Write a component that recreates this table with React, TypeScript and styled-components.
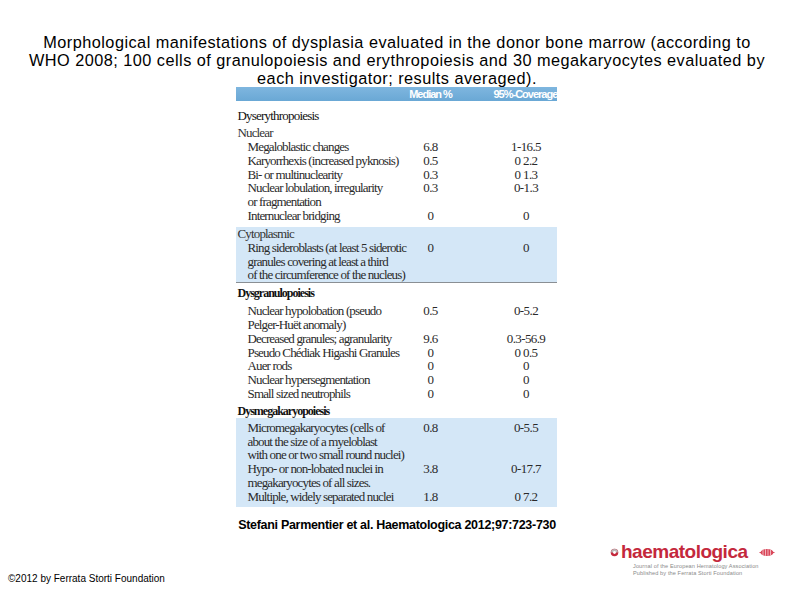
import React from "react";
import styled, { createGlobalStyle } from "styled-components";

const Global = createGlobalStyle`
  html, body { margin: 0; padding: 0; background: #fff; }
  #root { width: 794px; height: 595px; }
`;

const Page = styled.div`
  width: 794px;
  height: 595px;
  display: flex;
  flex-direction: column;
  align-items: center;
  background: #fff;
  overflow: hidden;
`;

const Title = styled.h1`
  margin: 0;
  padding-top: 33px;
  width: 780px;
  font-family: "Liberation Sans", Arial, sans-serif;
  font-weight: normal;
  font-size: 16.3px;
  letter-spacing: 0.47px;
  line-height: 18px;
  text-align: center;
  color: #000;
`;

const Table = styled.div`
  width: 321px;
  margin-left: -2px;
  font-family: "Liberation Serif", "Times New Roman", serif;
  color: #2a2a2a;
  font-size: 13px;
  letter-spacing: -0.85px;
`;

const HeaderBar = styled.div`
  height: 14px;
  display: grid;
  grid-template-columns: 170px 50px 1fr;
  align-items: center;
  background: linear-gradient(#7fb6df, #6aa8d5);
`;

const HeaderCell = styled.div<{ $offset?: number }>`
  grid-column: ${(p) => (p.$offset ? 3 : 2)};
  padding-left: ${(p) => p.$offset ?? 0}px;
  text-align: center;
  font-family: "Liberation Sans", Arial, sans-serif;
  font-weight: bold;
  font-size: 11px;
  letter-spacing: -1px;
  line-height: 14px;
  color: #fff;
  white-space: nowrap;
`;

const Heading = styled.div<{ $bold?: boolean; $gap: number }>`
  margin-top: ${(p) => p.$gap}px;
  padding-left: 2px;
  line-height: 14px;
  font-size: ${(p) => (p.$bold ? 12 : 13)}px;
  font-weight: ${(p) => (p.$bold ? "bold" : "normal")};
  letter-spacing: ${(p) => (p.$bold ? -1 : -0.8)}px;
  color: #111;
`;

const SubHeading = styled.div<{ $gap?: number }>`
  margin-top: ${(p) => p.$gap ?? 0}px;
  padding-left: 2px;
  line-height: 14px;
  color: #333;
`;

const Block = styled.div<{ $shaded?: boolean; $ruled?: boolean; $gap?: number; $pad?: number }>`
  margin-top: ${(p) => p.$gap ?? 0}px;
  padding: ${(p) => p.$pad ?? 0}px 0;
  background: ${(p) => (p.$shaded ? "#d4e7f7" : "transparent")};
  border-bottom: ${(p) => (p.$ruled ? "1px solid #8a8f94" : "none")};
`;

const Row = styled.div`
  display: grid;
  grid-template-columns: 170px 50px 1fr;
  align-items: start;
  line-height: 13.8px;
`;

const Label = styled.div`
  padding-left: 12px;
  white-space: nowrap;
`;

const Line = styled.span`
  display: block;
`;

const Value = styled.div<{ $offset?: number }>`
  padding-left: ${(p) => p.$offset ?? 0}px;
  text-align: center;
  white-space: nowrap;
  letter-spacing: -0.6px;
`;

const Citation = styled.div`
  margin-top: 11px;
  font-family: "Liberation Sans", Arial, sans-serif;
  font-weight: bold;
  font-size: 12.5px;
  letter-spacing: -0.3px;
  line-height: 14px;
  color: #000;
`;

const Spacer = styled.div`
  flex: 1;
`;

const Bottom = styled.div`
  align-self: stretch;
  display: flex;
  justify-content: space-between;
  align-items: flex-end;
  padding: 0 19px 10px 8px;
`;

const Copyright = styled.div`
  font-family: "Liberation Sans", Arial, sans-serif;
  font-size: 10px;
  line-height: 12px;
  color: #000;
`;

const Logo = styled.div`
  width: 170px;
  margin-bottom: 9px;
  display: flex;
  flex-direction: column;
`;

const LogoTop = styled.div`
  display: flex;
  align-items: center;
  height: 22px;
  padding-left: 5px;
`;

const LogoWord = styled.span`
  font-family: "Liberation Sans", Arial, sans-serif;
  font-weight: bold;
  font-size: 19px;
  letter-spacing: -0.5px;
  color: #c4283c;
  line-height: 22px;
  margin-left: 2px;
`;

const LogoSub = styled.div`
  padding-left: 28px;
  font-family: "Liberation Sans", Arial, sans-serif;
  font-size: 5.6px;
  letter-spacing: 0.1px;
  line-height: 6.5px;
  color: #8a8a8a;
  white-space: nowrap;
`;

type Item = { lines: string[]; median: string; cov: string };

const nuclear: Item[] = [
  { lines: ["Megaloblastic changes"], median: "6.8", cov: "1-16.5" },
  { lines: ["Karyorrhexis (increased pyknosis)"], median: "0.5", cov: "0 2.2" },
  { lines: ["Bi- or multinuclearity"], median: "0.3", cov: "0 1.3" },
  { lines: ["Nuclear lobulation, irregularity", "or fragmentation"], median: "0.3", cov: "0-1.3" },
  { lines: ["Internuclear bridging"], median: "0", cov: "0" },
];

const cyto: Item[] = [
  {
    lines: [
      "Ring sideroblasts (at least 5 siderotic",
      "granules covering at least a third",
      "of the circumference of the nucleus)",
    ],
    median: "0",
    cov: "0",
  },
];

const granulo: Item[] = [
  { lines: ["Nuclear hypolobation (pseudo", "Pelger-Huët anomaly)"], median: "0.5", cov: "0-5.2" },
  { lines: ["Decreased granules; agranularity"], median: "9.6", cov: "0.3-56.9" },
  { lines: ["Pseudo Chédiak Higashi Granules"], median: "0", cov: "0 0.5" },
  { lines: ["Auer rods"], median: "0", cov: "0" },
  { lines: ["Nuclear hypersegmentation"], median: "0", cov: "0" },
  { lines: ["Small sized neutrophils"], median: "0", cov: "0" },
];

const mega: Item[] = [
  {
    lines: ["Micromegakaryocytes (cells of", "about the size of a myeloblast", "with one or two small round  nuclei)"],
    median: "0.8",
    cov: "0-5.5",
  },
  { lines: ["Hypo- or non-lobated nuclei in", "megakaryocytes of all sizes."], median: "3.8", cov: "0-17.7" },
  { lines: ["Multiple, widely separated nuclei"], median: "1.8", cov: "0 7.2" },
];

const Rows = ({ items }: { items: Item[] }) => (
  <>
    {items.map((it, i) => (
      <Row key={i}>
        <Label>
          {it.lines.map((l, j) => (
            <Line key={j}>{l}</Line>
          ))}
        </Label>
        <Value>{it.median}</Value>
        <Value $offset={40}>{it.cov}</Value>
      </Row>
    ))}
  </>
);

const Emblem = () => (
  <svg width="9" height="9" viewBox="0 0 10 10">
    <circle cx="5" cy="5" r="4.2" fill="#c4283c" />
    <path d="M1.2 5 A3.8 3.8 0 0 1 8.8 5 Z" fill="#b9b9b9" />
    <circle cx="5" cy="5" r="1.6" fill="#fff" />
  </svg>
);

const Cell = () => (
  <svg width="16" height="9" viewBox="0 0 16 9" style={{ marginLeft: "auto" }}>
    <ellipse cx="8" cy="4.5" rx="6.5" ry="3.6" fill="#d9485a" />
    <path d="M4 2v5M6.5 1.2v6.6M9 1.2v6.6M11.5 2v5" stroke="#f4c0c6" strokeWidth="0.9" />
    <path d="M0.5 4.5h2M13.5 4.5h2" stroke="#d9485a" strokeWidth="1" />
  </svg>
);

export default function App() {
  return (
    <Page>
      <Global />
      <Title>
        Morphological manifestations of dysplasia evaluated in the donor bone marrow (according to
        <br />
        WHO 2008; 100 cells of granulopoiesis and erythropoiesis and 30 megakaryocytes evaluated by
        <br />
        each investigator; results averaged).
      </Title>
      <Table>
        <HeaderBar>
          <HeaderCell>Median %</HeaderCell>
          <HeaderCell $offset={38}>95%-Coverage</HeaderCell>
        </HeaderBar>
        <Heading $gap={8}>Dyserythropoiesis</Heading>
        <SubHeading $gap={3}>Nuclear</SubHeading>
        <Block>
          <Rows items={nuclear} />
        </Block>
        <Block $shaded $ruled $gap={4}>
          <SubHeading>Cytoplasmic</SubHeading>
          <Rows items={cyto} />
        </Block>
        <Heading $bold $gap={3}>Dysgranulopoiesis</Heading>
        <Block $gap={4}>
          <Rows items={granulo} />
        </Block>
        <Heading $bold $gap={3}>Dysmegakaryopoiesis</Heading>
        <Block $shaded $pad={3}>
          <Rows items={mega} />
        </Block>
      </Table>
      <Citation>Stefani Parmentier et al. Haematologica 2012;97:723-730</Citation>
      <Spacer />
      <Bottom>
        <Copyright>©2012 by Ferrata Storti Foundation</Copyright>
        <Logo>
          <LogoTop>
            <Emblem />
            <LogoWord>haematologica</LogoWord>
            <Cell />
          </LogoTop>
          <LogoSub>Journal of the European Hematology Association</LogoSub>
          <LogoSub>Published by the Ferrata Storti Foundation</LogoSub>
        </Logo>
      </Bottom>
    </Page>
  );
}
